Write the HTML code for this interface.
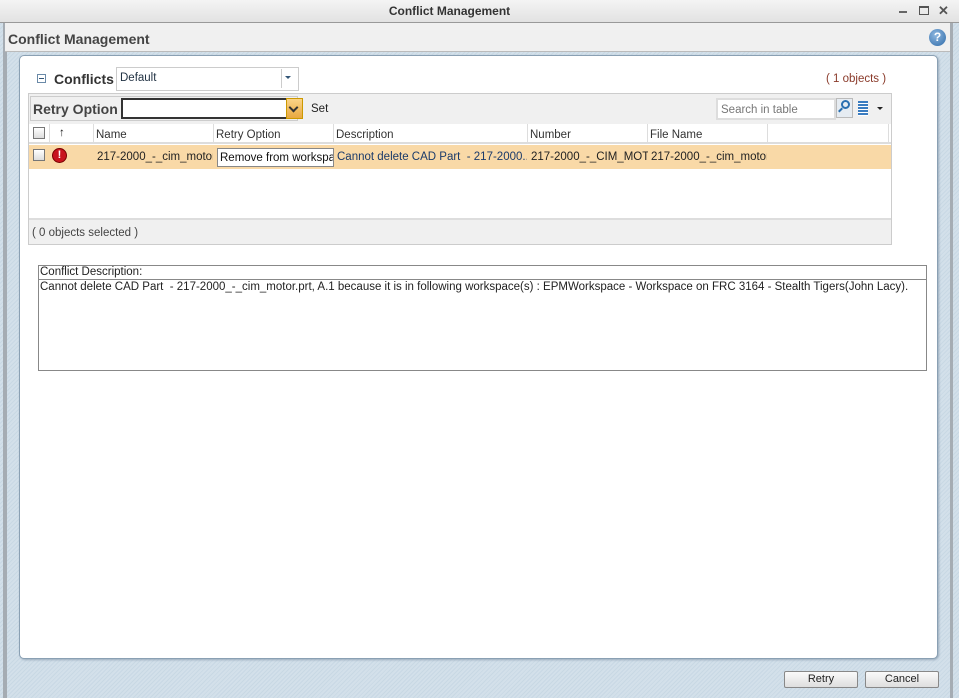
<!DOCTYPE html>
<html><head><style>
*{margin:0;padding:0;box-sizing:border-box}
body{width:959px;height:698px;overflow:hidden;font-family:"Liberation Sans",sans-serif;font-size:11.5px;color:#222;background:#d3e0ea;position:relative}
.a{position:absolute}
.bg{background:repeating-linear-gradient(135deg,#d3e0ea 0 2px,#c8d8e4 2px 3px)}
</style></head><body>
<div class="a bg" style="left:0;top:0;width:959px;height:698px"></div>
<div class="a" style="left:0;top:0;width:959px;height:23px;background:linear-gradient(#f4f4f4,#e2e2e2);border-bottom:1px solid #999"></div>
<div class="a" style="left:0;top:4px;width:899px;text-align:center;font-weight:bold;font-size:12px;color:#333">Conflict Management</div>
<div class="a" style="left:899px;top:11px;width:8px;height:2px;background:#666"></div>
<div class="a" style="left:919px;top:6px;width:10px;height:9px;border:1px solid #555;border-top-width:2px"></div>
<div class="a" style="left:938px;top:3px;font-weight:bold;color:#555;font-size:13px">✕</div>
<div class="a" style="left:3px;top:23px;width:4px;height:675px;background:#a5acb3"></div>
<div class="a" style="left:950px;top:23px;width:3px;height:675px;background:#a5acb3"></div>
<div class="a" style="left:5px;top:23px;width:945px;height:29px;background:#f0f0f0;border-bottom:1px solid #bbb"></div>
<div class="a" style="left:8px;top:31px;font-weight:bold;font-size:14px;color:#444">Conflict Management</div>
<div class="a" style="left:929px;top:29px;width:17px;height:17px;border-radius:50%;background:radial-gradient(circle at 40% 35%,#8fb8e0,#2e6aa8);color:#fff;font-weight:bold;text-align:center;line-height:17px;font-size:12px">?</div>
<div class="a" style="left:19px;top:55px;width:919px;height:604px;background:#fff;border:1px solid #8aa0b3;border-radius:5px;box-shadow:1px 1px 2px #9ab"></div>
<div class="a" style="left:37px;top:74px;width:9px;height:9px;border:1px solid #6a8aa8"></div>
<div class="a" style="left:39px;top:78px;width:5px;height:1px;background:#357"></div>
<div class="a" style="left:54px;top:71px;font-weight:bold;font-size:14px;color:#333">Conflicts</div>
<div class="a" style="left:116px;top:67px;width:183px;height:24px;border:1px solid #ccc;background:#fff"></div>
<div class="a" style="left:120px;top:72px;color:#234">Default</div>
<div class="a" style="left:281px;top:69px;width:1px;height:19px;background:#ccc"></div>
<div class="a" style="left:285px;top:76px;width:0;height:0;border-left:3px solid transparent;border-right:3px solid transparent;border-top:3px solid #357"></div>
<div class="a" style="left:826px;top:73px;color:#8a3a2a">( 1 objects )</div>
<div class="a" style="left:28px;top:93px;width:864px;height:152px;border:1px solid #ccc;background:#f0f0f0"></div>
<div class="a" style="left:30px;top:96px;width:268px;height:25px;border:1px solid #ccc"></div>
<div class="a" style="left:33px;top:101px;font-weight:bold;font-size:14px;color:#444">Retry Option</div>
<div class="a" style="left:121px;top:98px;width:166px;height:21px;border:2px solid #333;border-right:none;background:#fff"></div>
<div class="a" style="left:286px;top:98px;width:17px;height:21px;background:linear-gradient(#fbd488,#e8a840);border:1px solid #c90"></div>
<div class="a" style="left:290px;top:104px;width:7px;height:7px;border-right:2px solid #333;border-bottom:2px solid #333;transform:rotate(45deg)"></div>
<div class="a" style="left:311px;top:103px">Set</div>
<div class="a" style="left:716px;top:98px;width:120px;height:22px;border:2px solid #ddd;background:#fff;color:#777;padding:4px 3px">Search in table</div>
<div class="a" style="left:836px;top:98px;width:17px;height:20px;background:#e6ecf2;border:1px solid #bbb"></div>
<div class="a" style="left:841px;top:100px;width:9px;height:9px;border:2px solid #2a6fb0;border-radius:50%"></div>
<div class="a" style="left:838px;top:109px;width:5px;height:2px;background:#2a6fb0;transform:rotate(-45deg)"></div>
<div class="a" style="left:858px;top:101px;width:10px;height:15px;background:repeating-linear-gradient(#3a7cc0 0 2px,#fff 2px 3px)"></div>
<div class="a" style="left:877px;top:107px;width:0;height:0;border-left:3px solid transparent;border-right:3px solid transparent;border-top:3px solid #222"></div>
<div class="a" style="left:29px;top:124px;width:862px;height:94px;background:#fff"></div>
<div class="a" style="left:29px;top:124px;width:862px;height:20px;background:#fff;border-bottom:2px solid #ddd"></div>
<div class="a" style="left:33px;top:127px;width:12px;height:12px;border:1px solid #777;background:linear-gradient(#fff,#ddd)"></div>
<div class="a" style="left:59px;top:127px">↑</div>
<div class="a" style="left:49px;top:124px;width:1px;height:20px;background:#ddd"></div>
<div class="a" style="left:93px;top:124px;width:1px;height:20px;background:#ddd"></div>
<div class="a" style="left:213px;top:124px;width:1px;height:20px;background:#ddd"></div>
<div class="a" style="left:333px;top:124px;width:1px;height:20px;background:#ddd"></div>
<div class="a" style="left:527px;top:124px;width:1px;height:20px;background:#ddd"></div>
<div class="a" style="left:647px;top:124px;width:1px;height:20px;background:#ddd"></div>
<div class="a" style="left:767px;top:124px;width:1px;height:20px;background:#ddd"></div>
<div class="a" style="left:888px;top:124px;width:1px;height:20px;background:#ddd"></div>
<div class="a" style="left:96px;top:129px;color:#333">Name</div>
<div class="a" style="left:216px;top:129px;color:#333">Retry Option</div>
<div class="a" style="left:336px;top:129px;color:#333">Description</div>
<div class="a" style="left:530px;top:129px;color:#333">Number</div>
<div class="a" style="left:650px;top:129px;color:#333">File Name</div>
<div class="a" style="left:29px;top:145px;width:862px;height:24px;background:#f9d9a7"></div>
<div class="a" style="left:33px;top:149px;width:12px;height:12px;border:1px solid #777;background:linear-gradient(#fff,#ddd)"></div>
<div class="a" style="left:52px;top:148px;width:15px;height:15px;border-radius:50%;background:#c8141e;border:1px solid #700;color:#fff;font-weight:bold;text-align:center;line-height:13px;font-size:11px">!</div>
<div class="a" style="left:97px;top:151px;width:116px;overflow:hidden;white-space:nowrap">217-2000_-_cim_motor.</div>
<div class="a" style="left:217px;top:148px;width:117px;height:19px;background:#fff;border:1px solid #888;overflow:hidden;white-space:nowrap;padding:3px 2px;color:#111">Remove from workspace</div>
<div class="a" style="left:337px;top:151px;width:190px;overflow:hidden;color:#1a3a6a;white-space:nowrap">Cannot delete CAD Part &nbsp;- 217-2000...</div>
<div class="a" style="left:531px;top:151px;width:117px;overflow:hidden;white-space:nowrap">217-2000_-_CIM_MOTOR</div>
<div class="a" style="left:651px;top:151px;width:116px;overflow:hidden;white-space:nowrap">217-2000_-_cim_motor.</div>
<div class="a" style="left:29px;top:218px;width:862px;height:2px;background:#ddd"></div>
<div class="a" style="left:32px;top:227px;color:#444">( 0 objects selected )</div>
<div class="a" style="left:38px;top:265px;width:889px;height:106px;border:1px solid #888;background:#fff"></div>
<div class="a" style="left:38px;top:265px;width:889px;height:15px;border-bottom:1px solid #888"></div>
<div class="a" style="left:40px;top:266px">Conflict Description:</div>
<div class="a" style="left:40px;top:281px;white-space:nowrap">Cannot delete CAD Part &nbsp;- 217-2000_-_cim_motor.prt, A.1 because it is in following workspace(s) : EPMWorkspace - Workspace on FRC 3164 - Stealth Tigers(John Lacy).</div>
<div class="a" style="left:784px;top:671px;width:74px;height:17px;border:1px solid #888;border-radius:2px;background:linear-gradient(#fafafa,#dedede);text-align:center;line-height:15px;font-size:11px">Retry</div>
<div class="a" style="left:865px;top:671px;width:74px;height:17px;border:1px solid #888;border-radius:2px;background:linear-gradient(#fafafa,#dedede);text-align:center;line-height:15px;font-size:11px">Cancel</div>
</body></html>
